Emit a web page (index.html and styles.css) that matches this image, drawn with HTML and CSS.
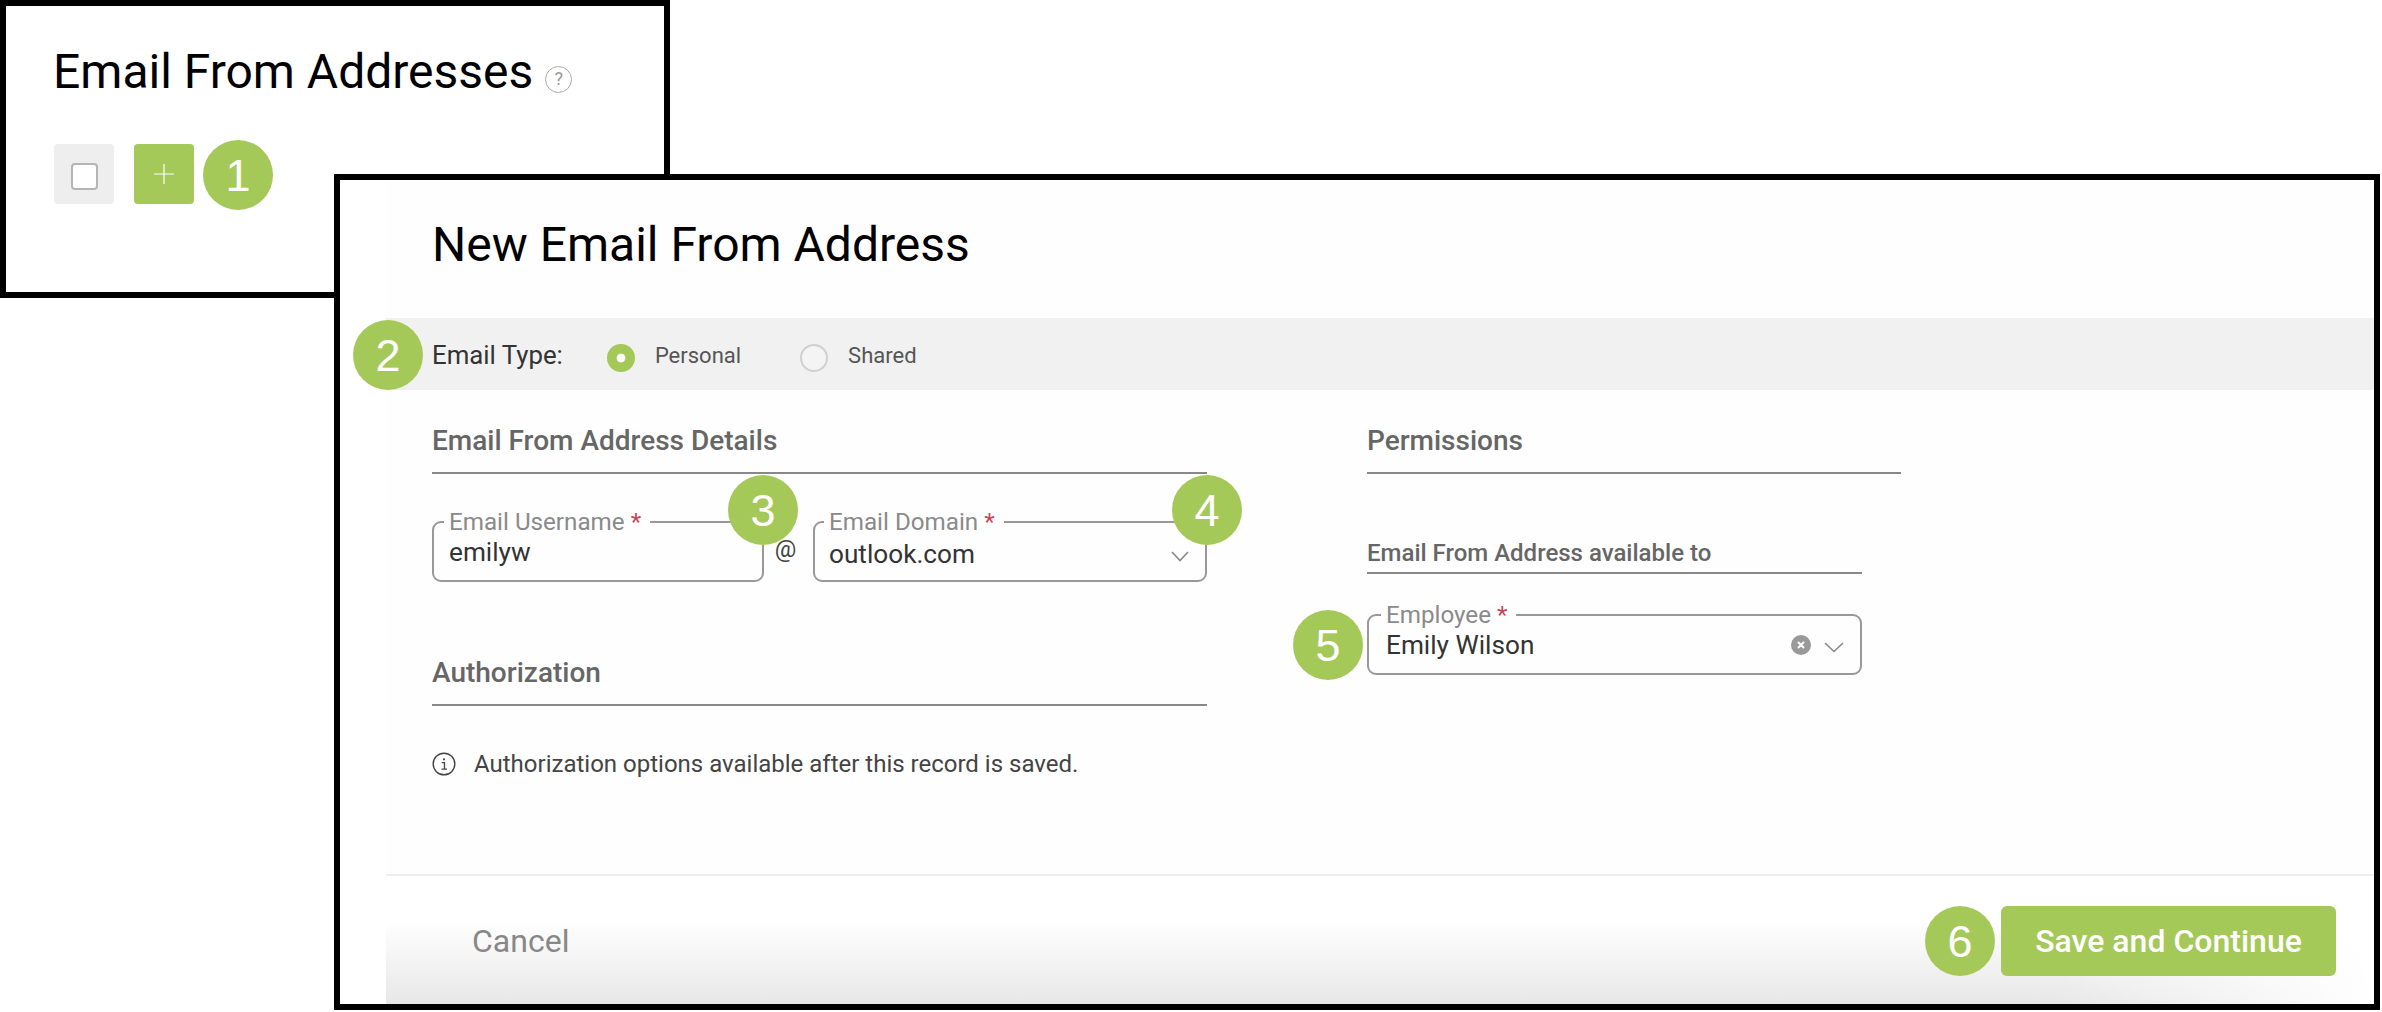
FILE: index.html
```html
<!DOCTYPE html>
<html lang="en">
<head>
<meta charset="utf-8">
<title>New Email From Address</title>
<link rel="stylesheet" href="styles.css">
</head>
<body>
<main class="canvas">
  <section class="win win-list">
    <h1 class="title title-list">Email From Addresses <span class="help">?</span></h1>
    <div class="toolbar">
      <button class="tool tool-check" type="button"><span class="box"></span></button>
      <button class="tool tool-add" type="button">
        <svg class="plus" viewBox="0 0 20 20" width="20" height="20"><path d="M10 0v20M0 10h20" fill="none" stroke="#fff" stroke-width="1.2"/></svg>
      </button>
    </div>
  </section>

  <section class="win win-form">
    <div class="sheet">
      <header class="form-head"><h1 class="title">New Email From Address</h1></header>

      <div class="type-band">
        <span class="type-label">Email Type:</span>
        <span class="radio radio-on"></span>
        <span class="radio-text">Personal</span>
        <span class="radio radio-off"></span>
        <span class="radio-text">Shared</span>
      </div>

      <div class="columns">
        <div class="col-left">
          <h2 class="section">Email From Address Details</h2>
          <div class="email-row">
            <fieldset class="field field-user">
              <legend>Email Username <em>*</em></legend>
              <div class="value">emilyw</div>
            </fieldset>
            <span class="at">@</span>
            <fieldset class="field field-domain">
              <legend>Email Domain <em>*</em></legend>
              <div class="value value-low">outlook.com
                <svg class="chev" viewBox="0 0 18 11" width="18" height="11"><path d="M1 1l8 8.500 8-8.500" fill="none" stroke="#888" stroke-width="1.6"/></svg>
              </div>
            </fieldset>
          </div>
          <h2 class="section section-auth">Authorization</h2>
          <p class="note">
            <svg class="info" viewBox="0 0 24 24" width="24" height="24"><circle cx="12" cy="12" r="10.800" fill="none" stroke="#444" stroke-width="1.400"/><circle cx="12" cy="7.300" r="1.100" fill="#444"/><path d="M9.800 10.700H12.500V17M9.500 17.200h5.500" fill="none" stroke="#444" stroke-width="1.300"/></svg>
            Authorization options available after this record is saved.
          </p>
        </div>

        <div class="col-right">
          <h2 class="section">Permissions</h2>
          <h3 class="subsection">Email From Address available to</h3>
          <fieldset class="field field-employee">
            <legend>Employee <em>*</em></legend>
            <div class="value">Emily Wilson
              <span class="value-icons">
                <svg class="clear" viewBox="0 0 20 20" width="20" height="20"><circle cx="10" cy="10" r="10" fill="#999"/><path d="M7 7l6 6M13 7l-6 6" stroke="#fff" stroke-width="2"/></svg>
                <svg class="chev-end" viewBox="0 0 20 11" width="20" height="11"><path d="M1 1l9 8.500 9-8.500" fill="none" stroke="#888" stroke-width="1.600"/></svg>
              </span>
            </div>
          </fieldset>
        </div>
      </div>

      <footer class="form-foot">
        <span class="cancel">Cancel</span>
        <button class="save" type="button">Save and Continue</button>
      </footer>
    </div>
  </section>

  <span class="callout c1">1</span>
  <span class="callout c2">2</span>
  <span class="callout c3">3</span>
  <span class="callout c4">4</span>
  <span class="callout c5">5</span>
  <span class="callout c6">6</span>
</main>
</body>
</html>
```

FILE: styles.css
```css
* { box-sizing: border-box; }

html, body {
  margin: 0;
  padding: 0;
  background: #fff;
}

body {
  font-family: Roboto, "Liberation Sans", sans-serif;
  color: #333;
}

.canvas {
  position: relative;
  width: 2382px;
  height: 1012px;
  overflow: hidden;
}

/* Two cropped screenshots lying on a free canvas */
.win {
  position: absolute;
  border: 6px solid #000;
  background: #fff;
}

.win-list {
  left: 0;
  top: 0;
  width: 670px;
  height: 298px;
  padding: 38px 0 0 48px;
}

.win-form {
  left: 334px;
  top: 174px;
  width: 2046px;
  height: 836px;
}

.title {
  margin: 0;
  font-size: 48px;
  line-height: 56px;
  font-weight: 400;
  color: #000;
}

.title-list {
  display: flex;
  align-items: center;
  margin-left: -1px;
  white-space: pre;
}

.help {
  display: flex;
  align-items: center;
  justify-content: center;
  width: 27px;
  height: 27px;
  margin: 14px 0 0 0;
  border: 1.5px solid #aaa;
  border-radius: 50%;
  color: #999;
  font-size: 18px;
  line-height: 1;
}

.toolbar {
  display: flex;
  gap: 20px;
  margin-top: 44px;
}

.tool {
  display: flex;
  align-items: center;
  justify-content: center;
  width: 60px;
  height: 60px;
  padding: 0;
  border: 0;
  border-radius: 4px;
}

.tool-check { background: #eee; }
.tool-add { background: #a5c958; }

.box {
  width: 27px;
  height: 27px;
  margin-top: 4px;
  background: #fff;
  border: 2.5px solid #b5b5b5;
  border-radius: 4px;
}

.sheet {
  display: flex;
  flex-direction: column;
  height: 100%;
  margin-left: 46px;
  background: #fefefe;
}

.form-head {
  height: 138px;
  padding: 37px 0 0 46px;
}

.type-band {
  display: flex;
  align-items: center;
  height: 72px;
  padding: 2px 0 0 46px;
  background: #f1f1f1;
}

.type-label {
  font-size: 25.8px;
  color: #333;
  margin-right: 44px;
}

.radio {
  width: 28px;
  height: 28px;
  margin: 5px 20px 0 0;
  border-radius: 50%;
}

.radio-on {
  background: radial-gradient(circle, #fff 0 4px, #a5c958 4.800px);
}

.radio-off {
  background: #f4f4f4;
  border: 2px solid #d0d0d0;
}

.radio-text {
  font-size: 22px;
  color: #555;
  margin-right: 59px;
  padding-top: 1px;
}

.columns {
  display: grid;
  grid-template-columns: 775px 495px;
  column-gap: 160px;
  padding-left: 46px;
  flex: 1;
}

.section {
  margin: 36px 0 0;
  padding-bottom: 16px;
  border-bottom: 2px solid #888;
  font-size: 28px;
  line-height: 30px;
  font-weight: 500;
  color: #666;
}

.col-right .section {
  width: 534px;
}

.section-auth {
  margin-top: 76px;
}

.subsection {
  margin: 65px 0 0;
  padding-bottom: 5px;
  border-bottom: 2px solid #888;
  font-size: 24px;
  line-height: 28px;
  font-weight: 500;
  color: #666;
}

.email-row {
  display: flex;
  margin-top: 36px;
}

.field {
  height: 72px;
  margin: 0;
  padding: 0 14px 0 15px;
  min-width: 0;
  border: 2px solid #999;
  border-radius: 9px;
  background: transparent;
}

.field legend {
  margin-left: -5px;
  padding: 0 9px 0 5px;
  font-size: 24.2px;
  line-height: 24px;
  color: #8a8a8a;
}

.field em {
  font-style: normal;
  color: #c9455a;
}

.field-user { width: 332px; }
.field-domain { flex: 1; padding-left: 14px; }

.field-employee {
  width: 100%;
  margin-top: 29px;
  padding-left: 17px;
}

.value {
  display: flex;
  align-items: center;
  justify-content: space-between;
  margin-top: 3px;
  font-size: 26.2px;
  line-height: 30px;
  color: #333;
}

.value-low { margin-top: 5px; }

.chev { margin: 4px 2px 0 0; }

.value-icons {
  display: flex;
  align-items: center;
  gap: 13px;
  margin-right: 2px;
}

.chev-end { margin-top: 4px; }

.at {
  width: 43px;
  margin: 25px 6px 0 0;
  text-align: center;
  font-size: 24px;
  line-height: 28px;
  color: #444;
}

.note {
  display: flex;
  align-items: center;
  gap: 18px;
  margin: 43px 0 0;
  font-size: 24px;
  line-height: 30px;
  color: #444;
}

.form-foot {
  display: flex;
  justify-content: space-between;
  align-items: flex-start;
  height: 130px;
  padding: 30px 38px 0 86px;
  border-top: 2px solid #eee;
  background:
    linear-gradient(to right, rgba(255, 255, 255, 0) 84%, #fff 100%),
    linear-gradient(to bottom, #fff 35%, #e7e7e7 100%);
}

.cancel {
  font-size: 32px;
  line-height: 70px;
  color: #888;
}

.save {
  width: 335px;
  height: 70px;
  padding: 0;
  border: 0;
  border-radius: 6px;
  background: #a5c958;
  color: #fff;
  font-family: Roboto, "Liberation Sans", sans-serif;
  font-size: 32px;
  font-weight: 500;
}

/* Numbered annotations lying over the screenshots */
.callout {
  position: absolute;
  display: flex;
  align-items: center;
  justify-content: center;
  width: 70px;
  height: 70px;
  border-radius: 50%;
  background: #a5c958;
  color: #fff;
  font-family: "Liberation Sans", Arial, sans-serif;
  font-size: 45px;
  line-height: 1;
}

.c1 { left: 203px; top: 140px; }
.c2 { left: 353px; top: 320px; }
.c3 { left: 728px; top: 475px; }
.c4 { left: 1172px; top: 475px; }
.c5 { left: 1293px; top: 610px; }
.c6 { left: 1925px; top: 906px; }
```
